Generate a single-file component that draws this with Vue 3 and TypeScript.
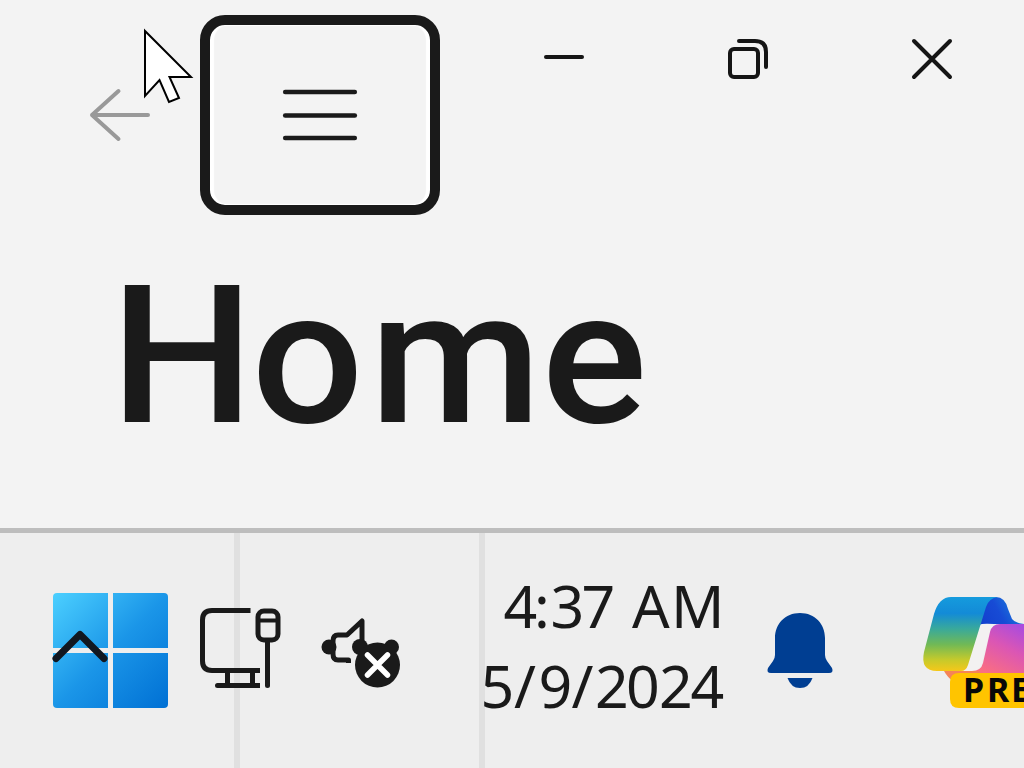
<script setup lang="ts">
const menuLines: number[] = [7, 30.5, 53]
const clock: { label: string; y: number; glyphs: string; xs: string }[] = [
  { label: 'time', y: 58, glyphs: '4:37 AM', xs: '22.5 53 69.5 100.5 136 151 190' },
  { label: 'date', y: 138, glyphs: '5/9/2024', xs: '-0.5 33 57.5 90.5 114 145 178 209.5' },
]
</script>

<template>
  <main class="screen">
    <section class="window">
      <header class="titlebar">
        <div class="back">
          <svg class="back-icon" width="64" height="56" viewBox="0 0 64 56">
            <path d="M30.500 4 L4 28 L30.500 52 M4 28 H60" />
          </svg>
        </div>
        <button class="menu" aria-label="Open navigation">
          <svg width="76" height="60" viewBox="0 0 76 60">
            <path v-for="y in menuLines" :key="y" :d="`M3.2 ${y} H72.8`" />
          </svg>
        </button>
        <nav class="caption">
          <button aria-label="Minimize">
            <svg width="44" height="44" viewBox="0 0 44 44"><path d="M4 20 H40" /></svg>
          </button>
          <button aria-label="Restore">
            <svg width="44" height="44" viewBox="0 0 44 44">
              <rect x="4" y="12" width="28" height="28" rx="4" />
              <path d="M13 4 H29 Q40 4 40 15 V30" />
            </svg>
          </button>
          <button aria-label="Close">
            <svg width="44" height="44" viewBox="0 0 44 44"><path d="M4 4 L40 40 M40 4 L4 40" /></svg>
          </button>
        </nav>
      </header>
      <h1 class="title">
        <svg width="560" height="220" viewBox="0 0 560 220">
          <text y="162" x="9.8 144.4 256.6 420.6" transform="scale(1.05 1)">H<tspan class="lower">ome</tspan></text>
        </svg>
      </h1>
    </section>

    <footer class="taskbar">
      <div class="cell start">
        <svg width="120" height="120" viewBox="0 0 120 120">
          <defs>
            <linearGradient id="win" gradientUnits="userSpaceOnUse" x1="3" y1="3" x2="118" y2="118">
              <stop offset="0" stop-color="#4cd0ff" />
              <stop offset="0.5" stop-color="#1b96e8" />
              <stop offset="1" stop-color="#0070d4" />
            </linearGradient>
          </defs>
          <g fill="url(#win)">
            <path d="M7 3 H58 V58 H3 V7 Q3 3 7 3Z" />
            <path d="M63 3 H114 Q118 3 118 7 V58 H63Z" />
            <path d="M3 63 H58 V118 H7 Q3 118 3 114Z" />
            <path d="M63 63 H118 V114 Q118 118 114 118 H63Z" />
          </g>
          <path class="chevron" d="M6 68.500 L30 44.500 L54 68.500" />
        </svg>
      </div>
      <div class="cell tray">
        <svg width="84" height="86" viewBox="0 0 84 86">
          <g class="line">
            <path d="M52.500 5.500 H14 Q4.500 5.500 4.500 15 V56 Q4.500 65.500 14 65.500 H62" stroke-linecap="butt" />
            <path d="M29.500 66 V80 M54.500 66 V80 M20 80.500 H62" stroke-linecap="butt" />
            <path d="M19.500 80.500 H30" />
            <rect x="60" y="6" width="20" height="29" rx="6" />
            <path d="M60 15.500 H80" stroke-width="4" />
            <path d="M69.500 36 V80.500" />
          </g>
        </svg>
        <svg width="86" height="76" viewBox="0 0 86 76">
          <circle cx="11" cy="34" r="7.500" fill="#1a1a1a" />
          <path class="speaker" d="M30.500 50 V47 H20 Q15 47 15 41 V28 Q15 22 20 22 H29 L44 8 V32" />
          <circle cx="42" cy="34" r="8" fill="#1a1a1a" />
          <circle cx="73.500" cy="34" r="7.500" fill="#1a1a1a" />
          <circle cx="59.500" cy="52" r="22.500" fill="#1a1a1a" />
          <path d="M49.500 42 L69.500 62 M69.500 42 L49.500 62" stroke="#fff" stroke-width="5.500" stroke-linecap="round" />
        </svg>
      </div>
      <div class="cell clock">
        <svg width="248" height="160" viewBox="0 0 248 160">
          <text v-for="row in clock" :key="row.label" :y="row.y" :x="row.xs" xml:space="preserve">{{ row.glyphs }}</text>
        </svg>
      </div>
      <div class="cell bell">
        <svg width="68" height="78" viewBox="0 0 68 78">
          <path d="M34 1 C19 1 9 12 9 26 V43 Q9 46 7 49 L2 56 Q0 61 5 61 H63 Q68 61 66 56 L61 49 Q59 46 59 43 V26 C59 12 49 1 34 1Z" fill="#003e92" />
          <path d="M21.500 66 H46.500 Q43 76 34 76 T21.500 66Z" fill="#003e92" />
        </svg>
      </div>
      <div class="cell copilot">
        <svg width="114" height="140" viewBox="0 0 114 140">
          <defs>
            <linearGradient id="leaf" gradientUnits="userSpaceOnUse" x1="46" y1="17" x2="46" y2="91">
              <stop offset="0" stop-color="#159bdd" />
              <stop offset="0.220" stop-color="#138bd7" />
              <stop offset="0.430" stop-color="#39a99b" />
              <stop offset="0.640" stop-color="#70b956" />
              <stop offset="0.850" stop-color="#c6ca2b" />
              <stop offset="1" stop-color="#f5c819" />
            </linearGradient>
            <linearGradient id="fold" x1="0" y1="0.800" x2="1" y2="0.300">
              <stop offset="0" stop-color="#103aca" />
              <stop offset="0.600" stop-color="#174bd5" />
              <stop offset="1" stop-color="#1b82dd" />
            </linearGradient>
            <linearGradient id="petal" gradientUnits="userSpaceOnUse" x1="108" y1="44" x2="82" y2="96">
              <stop offset="0" stop-color="#a94bdf" />
              <stop offset="0.450" stop-color="#db56b4" />
              <stop offset="1" stop-color="#fb6f80" />
            </linearGradient>
          </defs>
          <path d="M34 91 H72 L78 101 H43 Q38 98 34 91Z" fill="#f58457" />
          <path d="M62 17 H86 Q95 17 98 29 L102 39 Q105 43 114 44 H83 Q73 44 70 48 L62 62 L70 35 Q75 17 86 17Z" fill="url(#fold)" />
          <path d="M69 45 Q72 43 84 44 L78 59 L71 86 Q69 91 62 91 H51Z" fill="#f3f1f1" />
          <path d="M41 17 H88 Q79 18 76 27 L58 85 Q56 91 51 91 H27 Q10 91 14 72 L24 34 Q29 17 41 17Z" fill="url(#leaf)" />
          <path d="M114 44 H90 Q82 44 80 52 L73 83 Q71 91 62 91 H70 L68 100 H114Z" fill="url(#petal)" />
          <path d="M114 93 H49 Q40 93 40 102 V119 Q40 128 49 128 H114Z" fill="#ffc400" />
          <text class="badge" y="121.500" x="53 77 101">PRE</text>
        </svg>
      </div>
    </footer>

    <svg class="cursor" width="56" height="80" viewBox="0 0 56 80">
      <path d="M5 5 V70 L19.500 54 L29 76 L39 72 L29.500 51 H51Z" />
    </svg>
  </main>
</template>

<style>
html,
body {
  margin: 0;
  overflow: hidden;
}
</style>

<style scoped>
.screen {
  position: relative;
  width: 1024px;
  height: 768px;
  overflow: hidden;
  background: #f3f3f3;
  display: flex;
  flex-direction: column;
}
svg {
  display: block;
  flex: none;
}
button {
  padding: 0;
  border: 0;
  background: none;
  box-sizing: border-box;
}
.window {
  height: 528px;
}
.titlebar {
  display: grid;
  grid-template-columns: 200px 240px 1fr;
  height: 260px;
}
.back {
  padding: 87px 0 0 88px;
}
.back-icon path {
  fill: none;
  stroke: #999;
  stroke-width: 4;
  stroke-linecap: round;
  stroke-linejoin: round;
}
.menu {
  height: 200px;
  margin-top: 15px;
  border: 10px solid #1a1a1a;
  border-radius: 25px;
  box-shadow: inset 4px 0 1px #fff, inset -4px 0 1px #fff, inset 0 1px 1px #fff, inset 0 -1px 1px #fff;
  display: flex;
  justify-content: center;
  align-items: center;
}
.menu svg path {
  stroke: #1a1a1a;
  stroke-width: 4.600;
  stroke-linecap: round;
}
.caption {
  display: grid;
  grid-template-columns: repeat(3, 184px);
  justify-content: end;
  height: 118px;
}
.caption button {
  display: flex;
  align-items: center;
  justify-content: center;
}
.caption svg {
  fill: none;
  stroke: #151515;
  stroke-width: 4;
  stroke-linecap: round;
}
.title {
  margin: 0;
  padding-left: 100px;
}
.title text {
  font: 500 193px Roboto, "Open Sans", sans-serif;
  fill: #1a1a1a;
}
.title .lower {
  font-size: 188px;
}
.taskbar {
  height: 240px;
  box-sizing: border-box;
  border-top: 5px solid #bdbdbd;
  background: #eee;
  display: grid;
  grid-template-columns: 240px 245px 261px 154px 124px;
}
.start,
.tray {
  border-right: 6px solid #e0e0e0;
}
.start {
  padding: 57px 0 0 50px;
}
.tray {
  display: flex;
  gap: 36px;
  margin-left: -42px;
  padding-top: 72px;
}
.tray svg + svg {
  margin-top: 8px;
}
.line {
  fill: none;
  stroke: #1a1a1a;
  stroke-width: 5;
  stroke-linecap: round;
}
.speaker {
  fill: none;
  stroke: #1a1a1a;
  stroke-width: 5;
  stroke-linejoin: round;
}
.chevron {
  fill: none;
  stroke: #111720;
  stroke-width: 7;
  stroke-linecap: round;
  stroke-linejoin: round;
}
.clock {
  padding-top: 37px;
  margin-left: -4px;
}
.clock svg {
  overflow: visible;
}
.clock text {
  font: 400 59px "Noto Sans", "Open Sans", sans-serif;
  fill: #1a1a1a;
}
.bell {
  padding: 79px 0 0 20px;
}
.copilot {
  padding: 47px 0 0 10px;
}
.badge {
  font: 700 34px "Noto Sans", "Open Sans", sans-serif;
  fill: #080808;
}
.cursor {
  position: absolute;
  left: 140px;
  top: 26px;
}
.cursor path {
  fill: #fff;
  stroke: #000;
  stroke-width: 2;
}
</style>
